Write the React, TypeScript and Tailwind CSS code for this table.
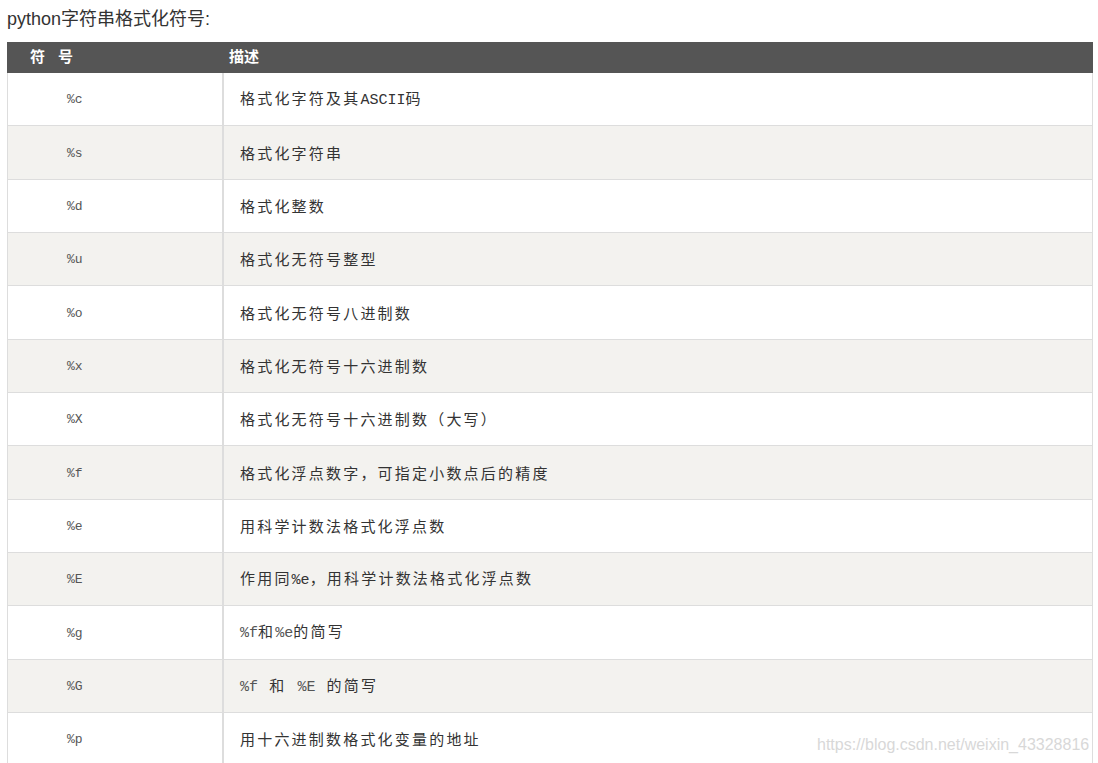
import React from "react";

const mono = "font-['Liberation_Mono',monospace] tracking-normal";

const rows: [string, React.ReactNode][] = [
  ["%c", <>格式化字符及其<span className={mono}>ASCII</span>码</>],
  ["%s", "格式化字符串"],
  ["%d", "格式化整数"],
  ["%u", "格式化无符号整型"],
  ["%o", "格式化无符号八进制数"],
  ["%x", "格式化无符号十六进制数"],
  ["%X", "格式化无符号十六进制数（大写）"],
  ["%f", "格式化浮点数字，可指定小数点后的精度"],
  ["%e", "用科学计数法格式化浮点数"],
  ["%E", <>作用同<span className={mono}>%e</span>，用科学计数法格式化浮点数</>],
  ["%g", <><span className={`${mono} text-[#555]`}>%f</span>和<span className={`${mono} text-[#555]`}>%e</span>的简写</>],
  ["%G", <><span className={`${mono} text-[#555]`}>%f</span>{"  和  "}<span className={`${mono} text-[#555]`}>%E</span>{"  的简写"}</>],
  ["%p", "用十六进制数格式化变量的地址"],
];

export default function App() {
  return (
    <div className="relative w-[1098px] h-[763px] overflow-hidden bg-white font-['Liberation_Sans','Noto_Sans_CJK_SC',sans-serif] text-[#333]">
      <div className="pl-[7px] pt-[7px] h-[42px] text-[18px] leading-[24px] text-[#333]">python字符串格式化符号:</div>
      <div className="ml-[7px] w-[1086px]">
        <div className="flex h-[31px] bg-[#555555] text-white font-bold text-[15px] items-center">
          <div className="w-[217px] pl-[23px] tracking-[13px]">符号</div>
          <div className="pl-[5px]">描述</div>
        </div>
        {rows.map(([code, desc], i) => (
          <div
            key={code}
            className={`flex h-[53.33px] border-l border-r border-b border-[#dddddd] ${i % 2 === 1 ? "bg-[#f3f2ef]" : "bg-white"}`}
          >
            <div className={`w-[216px] shrink-0 border-r-2 border-[#dddddd] flex items-center pl-[59px] pt-[2px] ${mono} text-[13px] text-[#555]`}>
              {code}
            </div>
            <div className="flex items-center pl-[16px] pt-[1px] text-[15px] tracking-[2.2px] text-[#333] font-['Noto_Sans_CJK_SC',sans-serif]">
              <span className="whitespace-pre">{desc}</span>
            </div>
          </div>
        ))}
      </div>
      <div className="absolute left-[817px] top-[733px] text-[16px] text-[#d8d8d8] font-['Liberation_Sans',sans-serif]">
        https://blog.csdn.net/weixin_43328816
      </div>
    </div>
  );
}
